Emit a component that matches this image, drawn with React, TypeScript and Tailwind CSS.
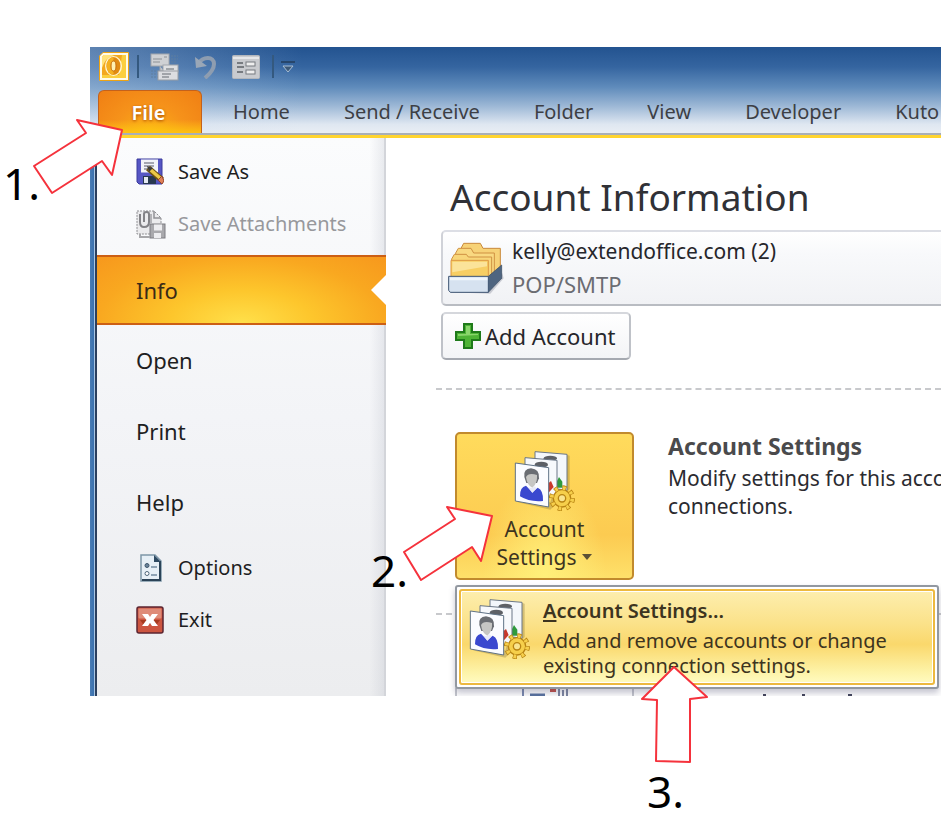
import type { ReactNode } from "react";

const TABS = ["Home", "Send / Receive", "Folder", "View", "Developer", "Kuto"];

const PLACES = ["Open", "Print", "Help"];

const ARROWS = [
  "M122 130 L77 120 L86 133 L34 166 L52 193 L102 161 L112 175 Z",
  "M492 516 L447 507 L455 519 L404 552 L421 580 L472 547 L481 561 Z",
  "M674 667 L707 697 L690 699 L690 762 L656 761 L657 700 L642 699 Z",
];

function OutlookIcon() {
  return (
    <svg className="h-[29px] w-[30px]" viewBox="0 0 30 29">
      <path d="M4 0.500 H29.500 V28.500 H0.500 V4 Z" fill="#fffbe8" stroke="#eda313" />
      <path d="M5 3 H27 V26 H3 V5 Z" fill="#f3a81f" />
      <path d="M5 3 H15 Q6 6 3 16 V5 Z" fill="#ffe27a" />
      <path d="M23 3 H27 V26 H3 V23 H20 Z" fill="#fbcf3f" />
      <ellipse cx="14.500" cy="14" rx="8.500" ry="10" fill="#fff6d0" />
      <ellipse cx="14.500" cy="14" rx="7" ry="9" fill="#e08a12" />
      <path d="M14.500 5 A7 9 0 0 0 14.500 23 Z" fill="#f4b021" />
      <ellipse cx="14.500" cy="14" rx="2.500" ry="5" fill="#fff0b0" stroke="#c56c0a" />
    </svg>
  );
}

function SendReceiveIcon() {
  return (
    <svg className="h-7 w-[30px]" viewBox="0 0 30 28" fill="none">
      <path d="M21 3 H28 M21 6 H28 M21 9 H27 M1 18 H8 M1 21 H8 M1 24 H8" stroke="#5f7f9f" strokeDasharray="2 1" />
      <rect x="1" y="1" width="18" height="12" fill="#cfd1d4" stroke="#a2a6ac" />
      <path d="M3 6 H12 M3 9 H10 M14 4 H17" stroke="#8d9196" />
      <path d="M10 13 V18 H14" fill="#c3c5c9" stroke="#a2a6ac" />
      <rect x="13" y="12" width="15" height="7" fill="#dfe0e2" stroke="#a2a6ac" />
      <rect x="8" y="18" width="20" height="9" fill="#dcdde0" stroke="#9a9ea4" />
      <path d="M16 16 H24 M12 21 H21 M12 24 H19" stroke="#8d9196" strokeWidth="1.500" />
    </svg>
  );
}

function UndoIcon() {
  return (
    <svg className="h-6 w-6" viewBox="0 0 24 24" fill="none">
      <path d="M4 9 C9 1 20 1 20 9 C20 14 17 18 11 23" stroke="#8e9db0" strokeWidth="4" />
      <path d="M1 2 L2 13 L13 11 Z" fill="#9aa7b7" />
    </svg>
  );
}

function FormIcon() {
  return (
    <svg className="h-6 w-7" viewBox="0 0 28 24">
      <rect x="0.5" y="0.5" width="27" height="23" rx="1" fill="#c9cbcf" stroke="#b3b7bd" />
      <path d="M1 3 H27" stroke="#e6e7e9" strokeWidth="2" />
      <path d="M5 8 H11 M5 12 H12 M5 17 H11" stroke="#777b80" strokeWidth="2" />
      <rect x="14" y="7" width="9" height="4" fill="#eee" stroke="#777b80" />
      <rect x="14" y="15" width="9" height="4" fill="#eee" stroke="#777b80" />
    </svg>
  );
}

function SaveAsIcon() {
  return (
    <svg className="h-7 w-7" viewBox="0 0 28 28">
      <path d="M1 1 H26 V26 H3 L1 24 Z" fill="#5656c4" stroke="#3a3a9c" />
      <rect x="5" y="1.500" width="17" height="13" fill="#f2f3f8" />
      <path d="M8 5 H18 M8 8 H18 M8 11 H14" stroke="#8a8d99" strokeWidth="1.500" />
      <rect x="7" y="18" width="13" height="8" fill="#27384f" />
      <rect x="8" y="19" width="4" height="6" fill="#e4e9f2" />
      <path d="M12 10 L26 22" stroke="#6f5311" strokeWidth="6" />
      <path d="M13 10.500 L24 20" stroke="#ebc946" strokeWidth="3.500" />
      <path d="M11 8 L17 10 L13 14 Z" fill="#3c3c3c" />
      <path d="M22 22 L26 18 L28 23 L26 26 Z" fill="#e08158" stroke="#94452b" />
    </svg>
  );
}

function SaveAttachmentsIcon() {
  return (
    <svg className="h-[29px] w-[30px]" viewBox="0 0 30 29" fill="none">
      <path d="M1 1 H18 L25 8 V24 H1 Z" fill="#ebebed" stroke="#8e8e92" strokeDasharray="2 1" />
      <path d="M18 1 V8 H25" stroke="#929296" strokeWidth="1.500" />
      <path d="M4 4 V12 Q4 17 8 17 Q13 17 13 12 V4 Q13 2 10.500 2 Q8 2 8 4 V12" stroke="#838387" strokeWidth="2" />
      <path d="M15 4 V13" stroke="#a1a1a5" strokeWidth="1.500" />
      <rect x="14" y="14" width="15" height="14" fill="#a9a9ad" stroke="#7d7d82" />
      <rect x="18" y="14.500" width="8" height="6" fill="#ededf0" />
      <rect x="18" y="23" width="7" height="5" fill="#ededf0" />
      <path d="M4 24 V27 H14" stroke="#a7a7aa" strokeWidth="2" />
    </svg>
  );
}

function OptionsIcon() {
  return (
    <svg className="mx-auto h-7 w-[22px]" viewBox="0 0 22 28" fill="none">
      <path d="M1 1 H15 L21 7 V27 H1 Z" fill="#e6eff6" stroke="#7d96a8" strokeWidth="1.500" />
      <path d="M20 7 V26 H2" stroke="#2b4357" strokeWidth="2" />
      <path d="M14 1 V8 H21 Z" fill="#2e4a62" />
      <circle cx="7" cy="11.500" r="2" fill="#69839a" stroke="#3d566b" />
      <circle cx="7" cy="19.500" r="2" fill="#fff" stroke="#4d667b" />
      <path d="M11 13 H17 M11 21 H17" stroke="#718ba0" strokeWidth="1.500" />
    </svg>
  );
}

function ExitIcon() {
  return (
    <svg className="h-7 w-7" viewBox="0 0 28 28">
      <rect x="1" y="1" width="26" height="26" rx="2" fill="#cc5540" stroke="#5b2430" strokeWidth="1.500" />
      <rect x="2.500" y="2.500" width="23" height="10" rx="1" fill="#df8b78" />
      <path d="M4 14 H24 L21 18 H7 Z" fill="#a83a1f" />
      <path d="M6 8 H12 L14 11 L16 8 H22 L17.500 14 L22 20 H16 L14 17 L12 20 H6 L10.500 14 Z" fill="#fff" />
    </svg>
  );
}

function FoldersIcon() {
  return (
    <svg className="h-[55px] w-[57px] shrink-0" viewBox="50 228 171 165">
      <path d="M60 382 L180 386 L220 340 L216 325 Z" fill="#c9cbd3" />
      <path d="M92 250 L100 235 H150 L158 250 H210 V316 L190 340 H92 Z" fill="#f7d277" stroke="#c98a3c" strokeWidth="3" />
      <path d="M76 264 L84 250 H122 L130 264 H192 V334 H76 Z" fill="#f9d981" stroke="#cf9142" strokeWidth="3" />
      <path d="M64 282 L72 268 H108 L114 276 H184 V340 H64 Z" fill="#f8d67a" stroke="#cf9142" strokeWidth="3" />
      <path d="M62 286 H174 V342 H62 Z" fill="#f7ce63" stroke="#dd9845" strokeWidth="3" />
      <path d="M66 290 H170 V304 L66 322 Z" fill="#fbe39a" />
      <path d="M174 334 L214 300 V340 L174 382 Z" fill="#4f6580" stroke="#35485f" strokeWidth="2" />
      <path d="M55 334 H174 V382 H60 L55 376 Z" fill="#d6e2f0" stroke="#3d5471" strokeWidth="3" />
      <path d="M59 338 H171 V346 H59 Z" fill="#eff5fb" />
    </svg>
  );
}

function PlusIcon() {
  return (
    <svg className="h-[26px] w-[26px]" viewBox="0 0 26 26">
      <path d="M9 1 H17 V9 H25 V17 H17 V25 H9 V17 H1 V9 H9 Z" fill="#4fb436" stroke="#1f7a1a" strokeWidth="2" />
      <path d="M11 3 H15 V11 H23 V12 L3 13 V11 H11 Z" fill="#8ad66c" />
    </svg>
  );
}

function AccountsIcon() {
  return (
    <svg className="h-[61px] w-[62px] shrink-0" viewBox="117 83 186 183">
      <path d="M128 240 L226 262 L284 200 V100 L270 96 L226 240 Z" fill="#8c7536" opacity="0.35" />
      <path d="M180 88 L276 96 V204 L180 190 Z" fill="#f4f7fb" stroke="#6b7787" strokeWidth="3" />
      <ellipse cx="226" cy="108" rx="20" ry="8" fill="#5d6066" />
      <path d="M246 176 L252 164 L262 178 V196 H246 Z" fill="#2f9a3c" />
      <path d="M150 106 L246 114 V226 L150 208 Z" fill="#f7f9fc" stroke="#6b7787" strokeWidth="3" />
      <ellipse cx="199" cy="127" rx="20" ry="9" fill="#5d6066" />
      <path d="M218 184 L228 176 L236 194 L220 212 Z" fill="#c9382b" />
      <path d="M121 122 L221 136 V254 L121 236 Z" fill="#fbfcff" stroke="#5f7286" strokeWidth="3" />
      <path d="M148 164 Q144 140 168 138 Q194 140 192 168 L186 182 H154 Z" fill="#6a6d73" />
      <path d="M153 164 Q160 150 186 158 Q188 184 172 196 Q156 188 153 164 Z" fill="#c6c6c4" />
      <path d="M135 222 Q134 194 153 190 L172 210 L188 196 Q206 204 204 236 Q164 240 135 222 Z" fill="#3a48cf" />
      <path d="M160 196 L172 212 L184 199 L180 192 L172 197 Z" fill="#e7e9f8" />
      <circle cx="261" cy="228" r="32" fill="none" stroke="#b88413" strokeWidth="14" strokeDasharray="12 13.130" />
      <circle cx="261" cy="228" r="26" fill="#f6cf4b" stroke="#b88413" strokeWidth="4" />
      <circle cx="261" cy="228" r="31" fill="none" stroke="#f6cf4b" strokeWidth="11" strokeDasharray="8 16.350" strokeDashoffset="-2" />
      <circle cx="261" cy="228" r="11" fill="#f9e48f" stroke="#b88413" strokeWidth="4" />
    </svg>
  );
}

function SmallItem({ icon, label, disabled }: { icon: ReactNode; label: string; disabled?: boolean }) {
  return (
    <button
      disabled={disabled}
      className="flex h-[52px] w-full items-center gap-3 pl-[39px] text-left text-[20px] text-[#1e1e22] disabled:text-[#97989c]"
    >
      <span className="flex w-[30px] shrink-0">{icon}</span>
      {label}
    </button>
  );
}

function Ribbon() {
  return (
    <header className="bg-[linear-gradient(to_right,rgba(200,218,238,0.35),transparent_25%),linear-gradient(to_bottom,#235390_0%,#3565a0_22%,#5f8bbb_44%,#9db8d6_65%,#dfe7f1_85%,#eff2f6_100%)]">
      <div className="flex h-[43px] items-center pb-1 pl-[9px]">
        <OutlookIcon />
        <span className="ml-2 h-[23px] w-[2px] bg-[#34597f]" />
        <button aria-label="Send/Receive All Folders" className="ml-[11px]"><SendReceiveIcon /></button>
        <button aria-label="Undo" className="ml-[14px]"><UndoIcon /></button>
        <button aria-label="Forms" className="ml-[14px]"><FormIcon /></button>
        <span className="ml-3 h-[23px] w-[2px] bg-[#34597f]" />
        <button aria-label="Customize Quick Access Toolbar" className="ml-[7px]">
          <svg className="h-3 w-[14px]" viewBox="0 0 14 12">
            <path d="M0 1 H14" stroke="#27466b" strokeWidth="2" />
            <path d="M2 5 H12 L7 11 Z" fill="#3c5877" stroke="#a9bfd6" />
          </svg>
        </button>
      </div>
      <nav className="flex h-[45px] items-stretch overflow-hidden border-b-2 border-[#a9afb7] pl-2 text-[20px] whitespace-nowrap text-[#3d3f45]">
        <button className="h-[45px] w-[104px] shrink-0 rounded-t-md border border-b-0 border-[#c4611b] bg-[linear-gradient(to_bottom,transparent_65%,#ffc811_100%),radial-gradient(ellipse_at_bottom,#fbb316_0%,#f6921a_50%,#f07f14_100%)] pr-[3px] font-semibold text-white [text-shadow:0_1px_3px_#a64a00]">
          File
        </button>
        <div className="flex gap-[54px] pl-[31px]">
          {TABS.map((tab) => (
            <button key={tab}>{tab}</button>
          ))}
        </div>
      </nav>
      <div className="h-[3px] bg-[#ffd42e]" />
    </header>
  );
}

function Sidebar() {
  return (
    <aside className="w-[289px] shrink-0 border-r-2 border-[#d3d5da] bg-[linear-gradient(to_right,transparent_95%,rgba(180,184,196,0.25)),linear-gradient(to_bottom,#fbfcfd,#f3f4f7_50%,#ecedef)] pt-2 pb-12">
      <SmallItem icon={<SaveAsIcon />} label="Save As" />
      <SmallItem icon={<SaveAttachmentsIcon />} label="Save Attachments" disabled />
      <button className="-mr-[2px] mt-[5px] flex h-[70px] w-[289px] items-center justify-between border-y-2 border-[#cc5f14] bg-[radial-gradient(ellipse_at_bottom,#ffe04a_0%,#fdc62c_35%,#f9a820_70%,#f7981d_100%)] pl-[39px] text-[22px] text-[#3a2a16]">
        Info
        <svg className="h-[30px] w-[15px]" viewBox="0 0 15 30">
          <path d="M15 0 L0 15 L15 30 Z" fill="#fff" />
        </svg>
      </button>
      {PLACES.map((place) => (
        <button key={place} className="flex h-[71px] w-full items-center pl-[39px] text-[22px] text-[#1e1e22]">
          {place}
        </button>
      ))}
      <div className="pt-1">
        <SmallItem icon={<OptionsIcon />} label="Options" />
        <SmallItem icon={<ExitIcon />} label="Exit" />
      </div>
    </aside>
  );
}

function SettingsMenu() {
  return (
    <div role="menu" className="absolute top-[153px] left-0 w-[484px] rounded-[3px] border-2 border-[#9298a0] bg-white p-[2px] shadow-[0_4px_6px_rgba(90,90,120,0.35)]">
      <button
        role="menuitem"
        className="flex h-[96px] w-full items-start gap-[12px] rounded-[3px] border-2 border-[#edb93f] bg-[linear-gradient(to_bottom,#fdeeae_0%,#fbe28a_35%,#fad86c_58%,#fdf3a8_88%,#fffbc0_100%)] pt-[7px] pl-2 text-left text-[20px] leading-[25px] text-[#3d3420] ring-1 ring-white ring-inset"
      >
        <AccountsIcon />
        <span className="whitespace-nowrap">
          <span className="mb-[5px] block font-semibold">
            <span className="underline underline-offset-2">A</span>ccount Settings...
          </span>
          Add and remove accounts or change
          <br />
          existing connection settings.
        </span>
      </button>
    </div>
  );
}

function AccountPage() {
  return (
    <main className="min-w-0 flex-1 overflow-hidden bg-white pt-[35px] pl-[50px]">
      <h1 className="ml-[14px] text-[37px] leading-[48px] whitespace-nowrap text-[#303136]">Account Information</h1>

      <div className="-mr-1 mt-[9px] ml-[5px] flex h-[76px] items-center rounded-[5px] border-2 border-t-[#dcdee5] border-r-[#d0d2d8] border-b-[#b9bcc2] border-l-[#d0d2d8] bg-[linear-gradient(to_bottom,#fff,#f8f9fb_30%,#f1f2f5)] pl-1">
        <FoldersIcon />
        <div className="pl-2 leading-[33px] whitespace-nowrap">
          <p className="text-[21px] text-[#26262b]">kelly@extendoffice.com (2)</p>
          <p className="text-[22px] text-[#6b6c72]">POP/SMTP</p>
        </div>
      </div>
      <button className="mt-[6px] ml-[5px] flex h-12 w-[190px] items-center gap-1 rounded-[5px] border-2 border-t-[#d5d7dc] border-r-[#bfc2c8] border-b-[#a5a9b0] border-l-[#bfc2c8] bg-[linear-gradient(to_bottom,#fff,#f3f4f6)] pl-3 text-[22px] whitespace-nowrap text-[#26262b]">
        <PlusIcon />
        Add Account
      </button>

      <div className="mt-7 border-t-2 border-dashed border-[#c8c9cc]" />

      <section className="relative mt-[42px] ml-[19px] flex items-start">
        <button
          aria-haspopup="menu"
          className="flex h-[148px] w-[179px] shrink-0 flex-col items-center rounded-[5px] border-2 border-[#c18a2d] bg-[radial-gradient(ellipse_at_bottom,#fff07a_0%,transparent_50%),linear-gradient(to_bottom,#ffdb5c,#fccb51_70%,#fee06a)] pt-4 text-[21px] leading-7 text-[#3d3420]"
        >
          <AccountsIcon />
          <span className="mt-1">Account</span>
          <span className="flex items-center gap-[6px]">
            Settings
            <svg className="h-[6px] w-[10px]" viewBox="0 0 10 6">
              <path d="M0 0 H10 L5 6 Z" fill="#5b5136" />
            </svg>
          </span>
        </button>
        <div className="pl-[34px] text-[21px] leading-7 whitespace-nowrap text-[#2b2b30]">
          <h2 className="mb-1 text-[23px] leading-7 font-bold text-[#4a4a4c]">Account Settings</h2>
          <p>
            Modify settings for this acco
            <br />
            connections.
          </p>
        </div>
        <SettingsMenu />
      </section>

      <div className="mt-[33px] border-t-2 border-dashed border-[#c8c9cc]" />

      {/* tops of the next section, cut off by the window edge */}
      <svg className="mt-[73px] ml-[19px] block h-2 w-full" fill="none">
        <path d="M1 0 V8 M178 0 V8" stroke="#c3c5cc" strokeWidth="2" />
        <path d="M68 0 V8" stroke="#7787ad" strokeWidth="2" />
        <path d="M75 7 H90" stroke="#56709f" strokeWidth="3" />
        <path d="M95 2 H101" stroke="#c4493e" strokeWidth="4" />
        <path d="M104 0 V8 M108 2 V8 M112 0 V8" stroke="#7b84a0" strokeWidth="2" />
        <path d="M308 7 H311 M347 7 H350 M393 7 H397" stroke="#3f4258" strokeWidth="2" />
      </svg>
    </main>
  );
}

export default function App() {
  return (
    <div className="relative overflow-hidden bg-white pt-[47px] pb-[120px] pl-[90px] font-['Noto_Sans',sans-serif]">
      <div className="bg-[linear-gradient(to_right,#4a7db5_0px,#3a70ad_4px,#a9c6e4_4px,#a9c6e4_5px,#2b3f5e_5px,#2b3f5e_7px,transparent_7px)]">
        <Ribbon />
        <div className="flex pl-[7px]">
          <Sidebar />
          <AccountPage />
        </div>
      </div>

      {/* step callouts */}
      <svg className="pointer-events-none absolute top-0 left-0 h-[816px] w-[941px]" viewBox="0 0 941 816">
        {ARROWS.map((d) => (
          <path key={d} d={d} fill="#fff" stroke="#f5323c" strokeWidth="2" strokeLinejoin="round" />
        ))}
      </svg>
      <span className="absolute top-[159px] left-[3px] text-[44px] leading-[48px] text-black">1.</span>
      <span className="absolute top-[546px] left-[371px] text-[44px] leading-[48px] text-black">2.</span>
      <span className="absolute top-[767px] left-[647px] text-[44px] leading-[48px] text-black">3.</span>
    </div>
  );
}
